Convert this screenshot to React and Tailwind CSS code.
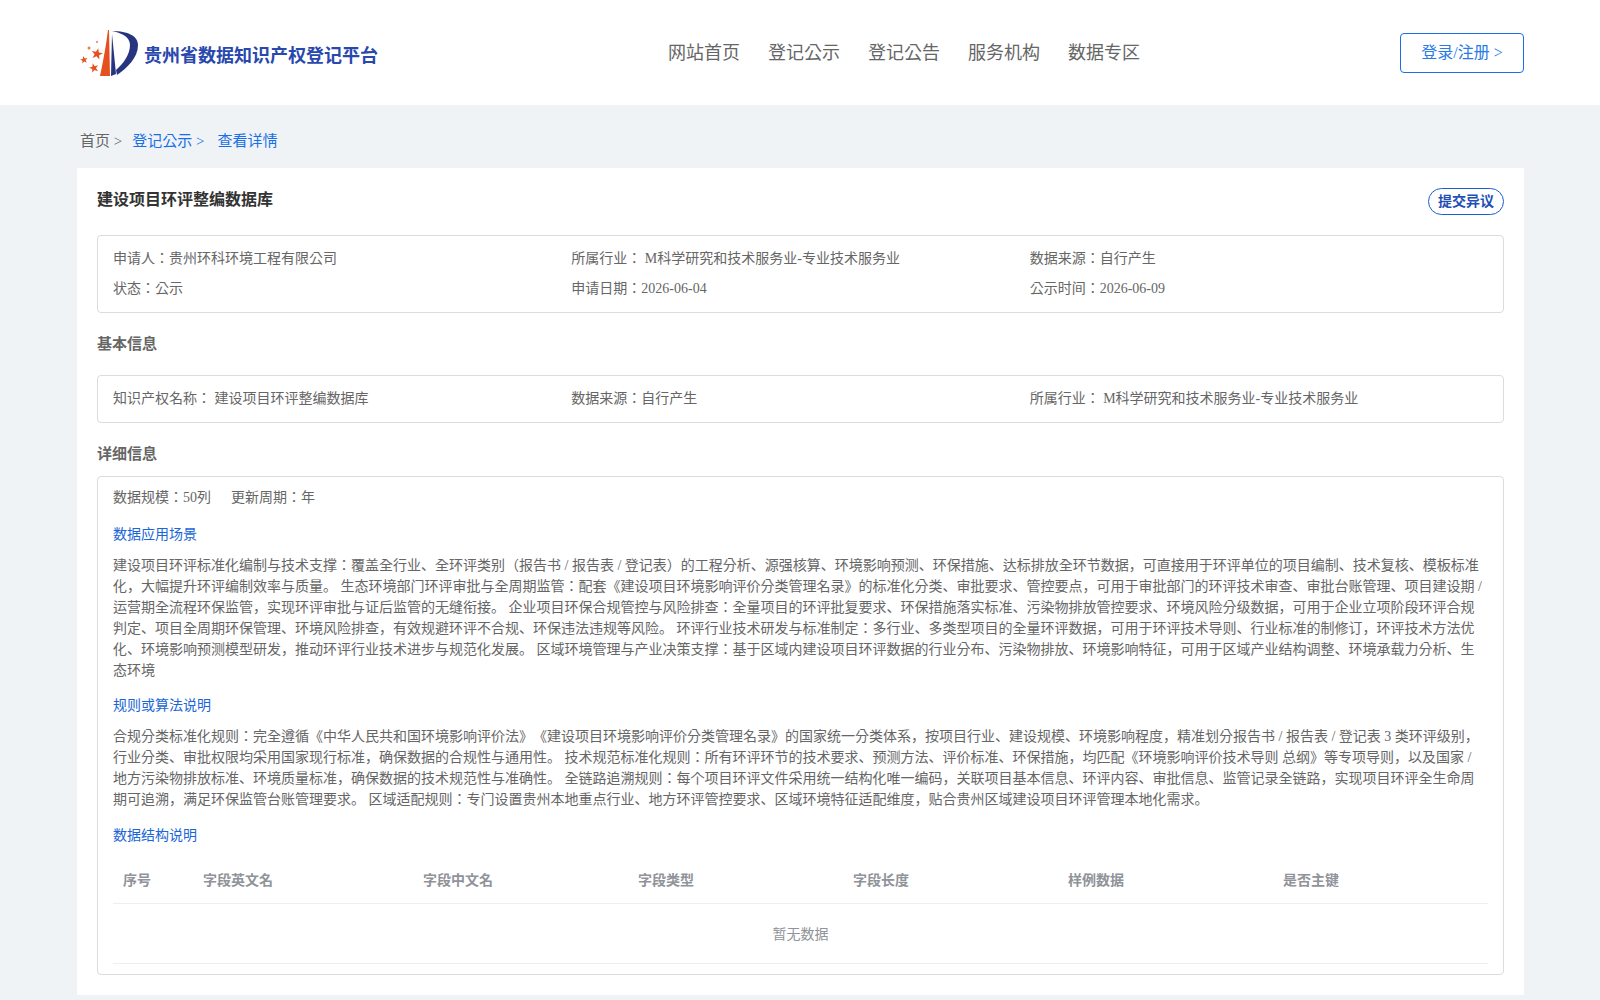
const Field = ({ children }) => <div className="leading-[30px]">{children}</div>;

const SubTitle = ({ children, className = "" }) => (
  <div className={`text-[#1a66d6] ${className}`}>{children}</div>
);

const Star = ({ x, y, r, fill = "#e4501f", rotate = 0 }) => (
  <polygon
    transform={`translate(${x} ${y}) rotate(${rotate}) scale(${r})`}
    points="0,-1 0.24,-0.32 0.95,-0.31 0.38,0.12 0.59,0.81 0,0.4 -0.59,0.81 -0.38,0.12 -0.95,-0.31 -0.24,-0.32"
    fill={fill}
  />
);

const Logo = () => (
  <svg width="58" height="50" viewBox="0 0 58 50" className="shrink-0">
    <path d="M28 2 C26 18 23 34 20 48 L30 48 L29 2 Z" fill="#e4501f" />
    <path d="M32 6 L36 46 L31 48 Z" fill="#27357f" />
    <path d="M32 3 C48 3 58 8 58 17 C58 30 47 40 37 47 L36 42 C44 35 50 26 50 17 C50 9 42 5 32 3 Z" fill="#27357f" />
    <Star x={17} y={26} r={6} rotate={12} />
    <Star x={4} y={32} r={4} rotate={-10} />
    <Star x={14} y={40} r={5} rotate={-15} />
    <circle cx="9" cy="20" r="1.500" fill="#ee7a50" />
    <circle cx="17" cy="14" r="1" fill="#ee7a50" />
  </svg>
);

export default function App() {
  const columns = ["序号", "字段英文名", "字段中文名", "字段类型", "字段长度", "样例数据", "是否主键"];

  return (
    <div className="min-h-[1000px] bg-[#eff3f6] font-['Liberation_Serif','Noto_Sans_CJK_KR',serif] text-sm text-[#666] [text-spacing-trim:space-all]">
      {/* Header */}
      <header className="flex h-[105px] items-center bg-white pl-20 pr-[76px]">
        <div className="flex w-[480px] items-center">
          <Logo />
          <span className="ml-1.5 pt-[8px] text-[18px] font-bold text-[#2948ad]">贵州省数据知识产权登记平台</span>
        </div>
        <nav className="ml-[108px] flex flex-1 gap-7 text-lg text-[#666]">
          <a>网站首页</a>
          <a>登记公示</a>
          <a>登记公告</a>
          <a>服务机构</a>
          <a>数据专区</a>
        </nav>
        <button className="h-10 w-[124px] rounded border border-[#1a6fe6] text-base text-[#2a7ae8]">登录/注册 &gt;</button>
      </header>

      {/* Breadcrumb */}
      <div className="flex h-[63px] items-center pt-[10px] pl-20 text-[15px]">
        <span>首页 &gt;</span>
        <span className="ml-[10px] text-[#1a6fe6]">登记公示 &gt;</span>
        <span className="ml-[13px] text-[#1a6fe6]">查看详情</span>
      </div>

      <main className="mx-[77px] w-[1447px] bg-white px-5 pt-5 pb-5">
        <div className="flex items-start justify-between">
          <h2 className="text-base leading-6 font-bold text-[#333]">建设项目环评整编数据库</h2>
          <button className="h-[27px] w-[76px] rounded-[14px] border border-[#1a5fd0] text-sm font-bold text-[#1f4fb5]">提交异议</button>
        </div>

        <div className="mt-[20px] grid grid-cols-3 rounded border border-[#dcdcdc] px-[15px] py-2">
          <Field>申请人：贵州环科环境工程有限公司</Field>
          <Field>所属行业： M科学研究和技术服务业-专业技术服务业</Field>
          <Field>数据来源：自行产生</Field>
          <Field>状态：公示</Field>
          <Field>申请日期：2026-06-04</Field>
          <Field>公示时间：2026-06-09</Field>
        </div>

        <h3 className="mt-[20px] text-[15px] leading-[22px] font-bold">基本信息</h3>

        <div className="mt-[20px] grid grid-cols-3 rounded border border-[#dcdcdc] px-[15px] py-2">
          <Field>知识产权名称： 建设项目环评整编数据库</Field>
          <Field>数据来源：自行产生</Field>
          <Field>所属行业： M科学研究和技术服务业-专业技术服务业</Field>
        </div>

        <h3 className="mt-[20px] text-[15px] leading-[23px] font-bold">详细信息</h3>

        <div className="mt-[10px] rounded border border-[#dcdcdc] px-[15px] pb-2.5">
          <div className="flex h-[41px] gap-5 leading-[42px]">
            <span>数据规模：50列</span>
            <span>更新周期：年</span>
          </div>

          <SubTitle className="mt-[6px] leading-[21px]">数据应用场景</SubTitle>
          <p className="mt-[10px] leading-[21px]">
            建设项目环评标准化编制与技术支撑：覆盖全行业、全环评类别（报告书 / 报告表 / 登记表）的工程分析、源强核算、环境影响预测、环保措施、达标排放全环节数据，可直接用于环评单位的项目编制、技术复核、模板标准化，大幅提升环评编制效率与质量。 生态环境部门环评审批与全周期监管：配套《建设项目环境影响评价分类管理名录》的标准化分类、审批要求、管控要点，可用于审批部门的环评技术审查、审批台账管理、项目建设期 / 运营期全流程环保监管，实现环评审批与证后监管的无缝衔接。 企业项目环保合规管控与风险排查：全量项目的环评批复要求、环保措施落实标准、污染物排放管控要求、环境风险分级数据，可用于企业立项阶段环评合规判定、项目全周期环保管理、环境风险排查，有效规避环评不合规、环保违法违规等风险。 环评行业技术研发与标准制定：多行业、多类型项目的全量环评数据，可用于环评技术导则、行业标准的制修订，环评技术方法优化、环境影响预测模型研发，推动环评行业技术进步与规范化发展。 区域环境管理与产业决策支撑：基于区域内建设项目环评数据的行业分布、污染物排放、环境影响特征，可用于区域产业结构调整、环境承载力分析、生态环境
          </p>

          <SubTitle className="mt-[14px] leading-[21px]">规则或算法说明</SubTitle>
          <p className="mt-[10px] leading-[21px]">
            合规分类标准化规则：完全遵循《中华人民共和国环境影响评价法》《建设项目环境影响评价分类管理名录》的国家统一分类体系，按项目行业、建设规模、环境影响程度，精准划分报告书 / 报告表 / 登记表 3 类环评级别，行业分类、审批权限均采用国家现行标准，确保数据的合规性与通用性。 技术规范标准化规则：所有环评环节的技术要求、预测方法、评价标准、环保措施，均匹配《环境影响评价技术导则 总纲》等专项导则，以及国家 / 地方污染物排放标准、环境质量标准，确保数据的技术规范性与准确性。 全链路追溯规则：每个项目环评文件采用统一结构化唯一编码，关联项目基本信息、环评内容、审批信息、监管记录全链路，实现项目环评全生命周期可追溯，满足环保监管台账管理要求。 区域适配规则：专门设置贵州本地重点行业、地方环评管控要求、区域环境特征适配维度，贴合贵州区域建设项目环评管理本地化需求。
          </p>

          <SubTitle className="mt-[15px] leading-[21px]">数据结构说明</SubTitle>

          <div className="mt-[10px] grid grid-cols-[80px_220px_repeat(5,1fr)] border-b border-[#ebeef5] font-bold text-[#909399]">
            {columns.map((c) => (
              <div key={c} className="px-2.5 pt-[13px] pb-[11px] leading-[23px]">{c}</div>
            ))}
          </div>
          <div className="flex h-[60px] items-center justify-center border-b border-[#ebeef5] pt-[2px] text-[#909399]">暂无数据</div>
        </div>
      </main>
    </div>
  );
}
